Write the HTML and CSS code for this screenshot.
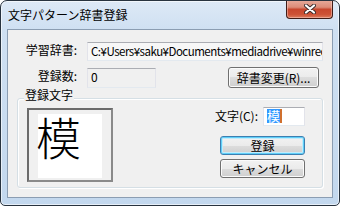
FILE: index.html
```html
<!DOCTYPE html>
<html lang="ja">
<head>
<meta charset="utf-8">
<link rel="stylesheet" href="styles.css">
</head>
<body>
<div class="window">
  <div class="titlebar">
    <span class="title">文字パターン辞書登録</span>
    <div class="close">
      <svg width="12" height="10" viewBox="0 0 12 10">
        <path d="M2 1.5 L10 8.5 M10 1.5 L2 8.5" stroke="#3a2a2a" stroke-width="4" stroke-linecap="round"/>
        <path d="M2 1.5 L10 8.5 M10 1.5 L2 8.5" stroke="#ffffff" stroke-width="2.2" stroke-linecap="round"/>
      </svg>
    </div>
  </div>
  <div class="client">
    <div class="row row1">
      <span class="lbl">学習辞書:</span>
      <div class="edit path">C:¥Users¥saku¥Documents¥mediadrive¥winrecognize¥dict</div>
    </div>
    <div class="row row2">
      <span class="lbl">登録数:</span>
      <div class="edit count">0</div>
      <button class="btn change">辞書変更(R)...</button>
    </div>
    <div class="group">
      <span class="legend">登録文字</span>
      <div class="preview"><div class="canvas">模</div></div>
      <div class="side">
        <div class="charrow">
          <span class="charlbl">文字(C):</span>
          <div class="edit char"><span class="sel">模</span><span class="caret"></span></div>
        </div>
        <button class="btn default">登録</button>
        <button class="btn cancel">キャンセル</button>
      </div>
    </div>
  </div>
</div>
</body>
</html>
```
FILE: styles.css
```css
html, body {
  margin: 0;
  padding: 0;
}
body {
  width: 340px;
  height: 206px;
  overflow: hidden;
  background: #ffffff;
  font-family: "Noto Sans CJK JP", sans-serif;
  font-size: 12px;
  color: #000000;
}
.window {
  box-sizing: border-box;
  width: 340px;
  height: 206px;
  border: 1px solid #28333f;
  border-radius: 7px 7px 5px 5px;
  background: linear-gradient(180deg, #dde9f6 0, #cfe0f2 28px, #c3d8ee 100%);
  box-shadow: inset 0 0 0 1px rgba(255, 255, 255, 0.6);
  display: flex;
  flex-direction: column;
  overflow: hidden;
}
.titlebar {
  height: 28px;
  flex: none;
  display: flex;
  align-items: flex-start;
}
.title {
  margin: 6px 0 0 7px;
  line-height: 16px;
  font-size: 12px;
  color: #000000;
}
.close {
  box-sizing: border-box;
  margin: -1px 6px 0 auto;
  width: 47px;
  height: 19px;
  border: 1px solid #3f1c17;
  border-top: none;
  border-radius: 0 0 4px 4px;
  background: linear-gradient(180deg, #e8ab9c 0, #dc8c78 40%, #c8472e 52%, #cd5236 80%, #dc7c5e 100%);
  box-shadow: inset 0 0 0 1px rgba(255, 220, 210, 0.45);
  display: flex;
  align-items: center;
  justify-content: center;
}
.close svg {
  display: block;
}
.client {
  flex: 1;
  margin: 0 6px 7px 6px;
  border: 1px solid #8b9db2;
  background: #f0f0f0;
  padding: 0 9px 0 9px;
  display: flex;
  flex-direction: column;
}
.row {
  display: flex;
  align-items: flex-start;
}
.row1 {
  margin-top: 12px;
}
.row2 {
  margin-top: 6px;
}
.lbl {
  box-sizing: border-box;
  width: 70px;
  flex: none;
  text-align: right;
  padding-right: 10px;
  line-height: 14px;
  padding-top: 1px;
}
.row2 .lbl {
  padding-top: 2px;
}
.edit {
  box-sizing: border-box;
  border: 1px solid #e2e3ea;
  border-top-color: #abadb3;
  border-bottom-color: #e3e9ef;
  background: #ffffff;
  padding: 1px 0 0 3px;
  line-height: 14px;
  white-space: nowrap;
  overflow: hidden;
}
.path {
  width: 236px;
  height: 19px;
  background: #f7f7f7;
  font-size: 11.5px;
  letter-spacing: -0.5px;
}
.count {
  width: 69px;
  height: 20px;
  margin-top: 1px;
  background: #f0f0f0;
}
.btn {
  box-sizing: border-box;
  font-family: inherit;
  font-size: 12px;
  color: #000000;
  border: 1px solid #707070;
  border-radius: 3px;
  background: linear-gradient(180deg, #f2f2f2 0, #ebebeb 50%, #dddddd 50%, #cfcfcf 100%);
  box-shadow: inset 0 0 0 1px #fbfbfb;
  padding: 0;
  line-height: 14px;
  margin: 0;
}
.change {
  width: 91px;
  height: 21px;
  margin-left: auto;
  margin-right: 4px;
}
.group {
  position: relative;
  box-sizing: border-box;
  margin-top: 10px;
  height: 90px;
  border: 1px solid #d5dfe5;
  border-radius: 3px;
  box-shadow: inset 1px 1px 0 #ffffff, 1px 1px 0 #ffffff;
  display: flex;
  align-items: flex-start;
  padding: 8px 17px 0 9px;
}
.legend {
  position: absolute;
  top: -11px;
  left: 6px;
  padding: 0 1px;
  background: #f0f0f0;
  line-height: 14px;
}
.preview {
  box-sizing: border-box;
  width: 86px;
  height: 74px;
  margin-top: 1px;
  border: 2px solid #6b6b6b;
  border-right-color: #8a8a8a;
  border-bottom-color: #8a8a8a;
  background: #f0f0f0;
  padding: 4px 0 0 9px;
}
.canvas {
  width: 64px;
  height: 64px;
  background: #ffffff;
  font-size: 45px;
  font-weight: 300;
  line-height: 45px;
  text-indent: -2px;
  overflow: visible;
  white-space: nowrap;
}
.side {
  margin-left: auto;
  display: flex;
  flex-direction: column;
  align-items: flex-end;
}
.charrow {
  display: flex;
  align-items: flex-start;
}
.charlbl {
  line-height: 14px;
  padding-top: 2px;
  margin-right: 5px;
}
.char {
  width: 42px;
  height: 19px;
  padding: 1px 0 0 3px;
  display: flex;
  align-items: flex-start;
}
.sel {
  background: #3399ff;
  color: #ffffff;
  font-size: 13px;
  line-height: 14px;
  width: 13px;
  display: block;
}
.caret {
  display: block;
  width: 2px;
  height: 14px;
  background: #d0702e;
}
.default {
  width: 85px;
  height: 19px;
  margin-top: 10px;
  border-color: #3c7fb1;
  box-shadow: inset 0 0 0 1px #5fcff8, inset 0 0 0 2px #c3ebfb;
}
.cancel {
  width: 85px;
  height: 19px;
  margin-top: 4px;
}
```
